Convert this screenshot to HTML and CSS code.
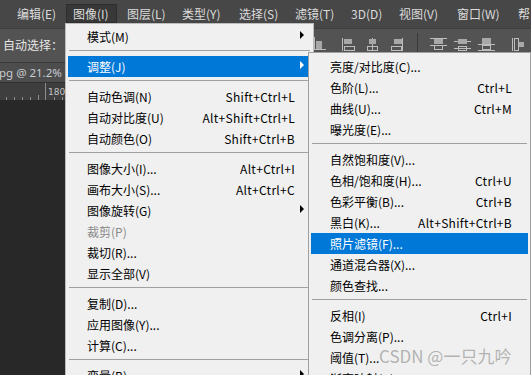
FILE: index.html
```html
<!DOCTYPE html>
<html lang="zh">
<head>
<meta charset="utf-8">
<link rel="stylesheet" href="styles.css">
</head>
<body>
<div class="app">
  <div class="menubar">
    <div class="m w56">编辑(E)</div>
    <div class="m active">图像(I)</div>
    <div class="m w55">图层(L)</div>
    <div class="m w57">类型(Y)</div>
    <div class="m w56">选择(S)</div>
    <div class="m w56">滤镜(T)</div>
    <div class="m w48">3D(D)</div>
    <div class="m w58">视图(V)</div>
    <div class="m w61">窗口(W)</div>
    <div class="m">帮</div>
  </div>
  <div class="options">
    <div class="opt-label">自动选择：</div>
    <svg class="opt-icons" width="221" height="20" viewBox="0 0 221 20">
      <g stroke="#bdbdbd" stroke-width="1" fill="none">
        <rect x="-1.5" y="4.5" width="6" height="11"/>
        <line x1="0" y1="16.5" x2="16" y2="16.5"/>
        <line x1="32.5" y1="5" x2="32.5" y2="18"/>
        <rect x="34.5" y="13.5" width="10" height="4"/>
        <line x1="62.5" y1="5" x2="62.5" y2="18"/>
        <rect x="57.5" y="13.5" width="10" height="4"/>
        <line x1="92.5" y1="5" x2="92.5" y2="18"/>
        <rect x="81.5" y="13.5" width="10" height="4"/>
        <line x1="120" y1="5.5" x2="137" y2="5.5"/>
        <line x1="120" y1="12.5" x2="137" y2="12.5"/>
        <rect x="124.5" y="12.5" width="8" height="4"/>
        <rect x="148.5" y="13.5" width="8" height="4"/>
        <line x1="144" y1="8.5" x2="161" y2="8.5"/>
        <line x1="144" y1="15.5" x2="161" y2="15.5"/>
        <rect x="172.5" y="12.5" width="8" height="4"/>
        <line x1="168" y1="11.5" x2="185" y2="11.5"/>
        <line x1="168" y1="17.5" x2="185" y2="17.5"/>
        <line x1="202.5" y1="5" x2="202.5" y2="18"/>
        <rect x="204.5" y="5.5" width="4" height="12"/>
      </g>
      <g fill="#a8a8a8">
        <rect x="6" y="8" width="6" height="8"/>
        <rect x="34" y="6" width="8" height="5"/>
        <rect x="59" y="6" width="7" height="5"/>
        <rect x="84" y="6" width="8" height="5"/>
        <rect x="124" y="6" width="9" height="5"/>
        <rect x="148" y="6" width="9" height="5"/>
        <rect x="172" y="5" width="9" height="6"/>
        <rect x="209" y="9" width="5" height="5"/>
      </g>
      <line x1="107.5" y1="0" x2="107.5" y2="20" stroke="#3a3a3a"/>
    </svg>
  </div>
  <div class="tabrow"><span class="tabtext">pg @ 21.2%</span></div>
  <div class="ruler">
    <svg width="66" height="18" viewBox="0 0 66 18">
      <g stroke="#8c8c8c" stroke-width="1">
        <line x1="45.5" y1="0" x2="45.5" y2="18"/>
        <line x1="6.5" y1="14" x2="6.5" y2="18"/>
        <line x1="14.5" y1="14" x2="14.5" y2="18"/>
        <line x1="22.5" y1="14" x2="22.5" y2="18"/>
        <line x1="30.5" y1="14" x2="30.5" y2="18"/>
        <line x1="38.5" y1="12" x2="38.5" y2="18"/>
        <line x1="54.5" y1="14" x2="54.5" y2="18"/>
        <line x1="62.5" y1="14" x2="62.5" y2="18"/>
      </g>
      <text x="48" y="12" class="ruler-num">180</text>
    </svg>
  </div>
  <div class="canvas"></div>
</div>

<div class="menu main-menu">
  <div class="item"><span class="lbl">模式(M)</span><span class="sc"></span><span class="arr"><i class="tri"></i></span></div>
  <div class="sep"></div>
  <div class="item hl"><span class="lbl">调整(J)</span><span class="sc"></span><span class="arr"><i class="tri"></i></span></div>
  <div class="sep"></div>
  <div class="item"><span class="lbl">自动色调(N)</span><span class="sc">Shift+Ctrl+L</span><span class="arr"></span></div>
  <div class="item"><span class="lbl">自动对比度(U)</span><span class="sc">Alt+Shift+Ctrl+L</span><span class="arr"></span></div>
  <div class="item"><span class="lbl">自动颜色(O)</span><span class="sc">Shift+Ctrl+B</span><span class="arr"></span></div>
  <div class="sep"></div>
  <div class="item"><span class="lbl">图像大小(I)...</span><span class="sc">Alt+Ctrl+I</span><span class="arr"></span></div>
  <div class="item"><span class="lbl">画布大小(S)...</span><span class="sc">Alt+Ctrl+C</span><span class="arr"></span></div>
  <div class="item"><span class="lbl">图像旋转(G)</span><span class="sc"></span><span class="arr"><i class="tri"></i></span></div>
  <div class="item dis"><span class="lbl">裁剪(P)</span><span class="sc"></span><span class="arr"></span></div>
  <div class="item"><span class="lbl">裁切(R)...</span><span class="sc"></span><span class="arr"></span></div>
  <div class="item"><span class="lbl">显示全部(V)</span><span class="sc"></span><span class="arr"></span></div>
  <div class="sep"></div>
  <div class="item"><span class="lbl">复制(D)...</span><span class="sc"></span><span class="arr"></span></div>
  <div class="item"><span class="lbl">应用图像(Y)...</span><span class="sc"></span><span class="arr"></span></div>
  <div class="item"><span class="lbl">计算(C)...</span><span class="sc"></span><span class="arr"></span></div>
  <div class="sep"></div>
  <div class="item"><span class="lbl">变量(B)</span><span class="sc"></span><span class="arr"><i class="tri"></i></span></div>
</div>

<div class="menu sub-menu">
  <div class="item"><span class="lbl">亮度/对比度(C)...</span><span class="sc"></span></div>
  <div class="item"><span class="lbl">色阶(L)...</span><span class="sc">Ctrl+L</span></div>
  <div class="item"><span class="lbl">曲线(U)...</span><span class="sc">Ctrl+M</span></div>
  <div class="item"><span class="lbl">曝光度(E)...</span><span class="sc"></span></div>
  <div class="sep"></div>
  <div class="item"><span class="lbl">自然饱和度(V)...</span><span class="sc"></span></div>
  <div class="item"><span class="lbl">色相/饱和度(H)...</span><span class="sc">Ctrl+U</span></div>
  <div class="item"><span class="lbl">色彩平衡(B)...</span><span class="sc">Ctrl+B</span></div>
  <div class="item"><span class="lbl">黑白(K)...</span><span class="sc">Alt+Shift+Ctrl+B</span></div>
  <div class="item hl"><span class="lbl">照片滤镜(F)...</span><span class="sc"></span></div>
  <div class="item"><span class="lbl">通道混合器(X)...</span><span class="sc"></span></div>
  <div class="item"><span class="lbl">颜色查找...</span><span class="sc"></span></div>
  <div class="sep"></div>
  <div class="item"><span class="lbl">反相(I)</span><span class="sc">Ctrl+I</span></div>
  <div class="item"><span class="lbl">色调分离(P)...</span><span class="sc"></span></div>
  <div class="item"><span class="lbl">阈值(T)...</span><span class="sc"></span></div>
  <div class="item"><span class="lbl">渐变映射(G)...</span><span class="sc"></span></div>
</div>

<div class="watermark">CSDN @一只九吟</div>
</body>
</html>
```

FILE: styles.css
```css
* { box-sizing: border-box; }
html, body {
  margin: 0;
  padding: 0;
}
body {
  width: 531px;
  height: 375px;
  overflow: hidden;
  position: relative;
  background: #282828;
  font-family: "Noto Sans CJK SC", "Noto Sans", sans-serif;
  font-size: 12px;
}
.app {
  display: flex;
  flex-direction: column;
  height: 375px;
}
.menubar {
  height: 28px;
  background: #474747;
  display: flex;
  align-items: center;
  padding-left: 10px;
  flex-shrink: 0;
  white-space: nowrap;
  overflow: hidden;
}
.m {
  height: 19px;
  line-height: 18px;
  padding-left: 7px;
  color: #dcdcdc;
  flex-shrink: 0;
}
.w56 { width: 56px; }
.w55 { width: 55px; }
.w57 { width: 57px; }
.w48 { width: 48px; }
.w58 { width: 58px; }
.w61 { width: 61px; }
.m.active {
  width: 51px;
  margin-right: 3px;
  background: #383838;
  border: 1px solid #2e2e2e;
  padding-left: 6px;
  margin-top: -1px;
}
.options {
  height: 34px;
  background: #535353;
  border-top: 1px solid #3f3f3f;
  display: flex;
  flex-shrink: 0;
}
.opt-label {
  width: 310px;
  flex-shrink: 0;
  padding-left: 3px;
  line-height: 32px;
  color: #e6e6e6;
  font-size: 12px;
}
.opt-icons {
  flex-shrink: 0;
  margin-top: 4px;
}
.tabrow {
  height: 20px;
  background: #4d4d4d;
  border-top: 1px solid #3a3a3a;
  flex-shrink: 0;
  overflow: hidden;
  white-space: nowrap;
}
.tabtext {
  font-family: "Noto Sans", sans-serif;
  font-size: 11.5px;
  color: #c9ccd3;
  line-height: 19px;
  margin-left: -1px;
}
.ruler {
  height: 18px;
  background: #3e3e3e;
  border-top: 1px solid #303030;
  flex-shrink: 0;
}
.ruler svg { display: block; }
.ruler-num {
  font-family: "DejaVu Sans", sans-serif;
  font-size: 9px;
  fill: #c4c4c4;
}
.canvas {
  flex: 1;
  background: #282828;
}

/* dropdown menus */
.menu {
  position: absolute;
  background: #f0f0f0;
  padding: 2px;
  color: #000;
  font-size: 12px;
  white-space: nowrap;
}
.main-menu {
  left: 65px;
  top: 23px;
  width: 249px;
  height: 380px;
  border: 1px solid #bcbcbc;
  padding-top: 2px;
}
.sub-menu {
  left: 308px;
  top: 52px;
  width: 223px;
  height: 340px;
  border: 1px solid #a0a0a0;
  padding-top: 3px;
}
.item {
  display: flex;
  align-items: center;
  height: 21px;
  padding-left: 19px;
}
.item .lbl { flex: 1; }
.item .sc {
  text-align: right;
  letter-spacing: 0.3px;
}
.main-menu .item .arr {
  width: 16px;
  height: 21px;
  flex-shrink: 0;
  display: flex;
  align-items: center;
}
.sub-menu .item { padding-right: 16px; }
.tri {
  display: block;
  margin-left: 5px;
  margin-top: -3px;
  width: 0;
  height: 0;
  border-left: 4px solid #000;
  border-top: 4px solid transparent;
  border-bottom: 4px solid transparent;
}
.item.hl {
  background: #0078d7;
  color: #fff;
}
.item.hl .tri { border-left-color: #fff; }
.item.dis { color: #8a8a8a; }
.sep {
  height: 9px;
  padding-top: 3px;
  margin: 0 1px;
}
.sep::before {
  content: "";
  display: block;
  height: 1px;
  background: #a0a0a0;
}
.watermark {
  position: absolute;
  left: 379px;
  top: 346px;
  font-family: "Noto Sans CJK SC", "Noto Sans", sans-serif;
  font-size: 17px;
  line-height: 20px;
  color: rgba(150, 150, 150, 0.7);
  white-space: nowrap;
}
```
